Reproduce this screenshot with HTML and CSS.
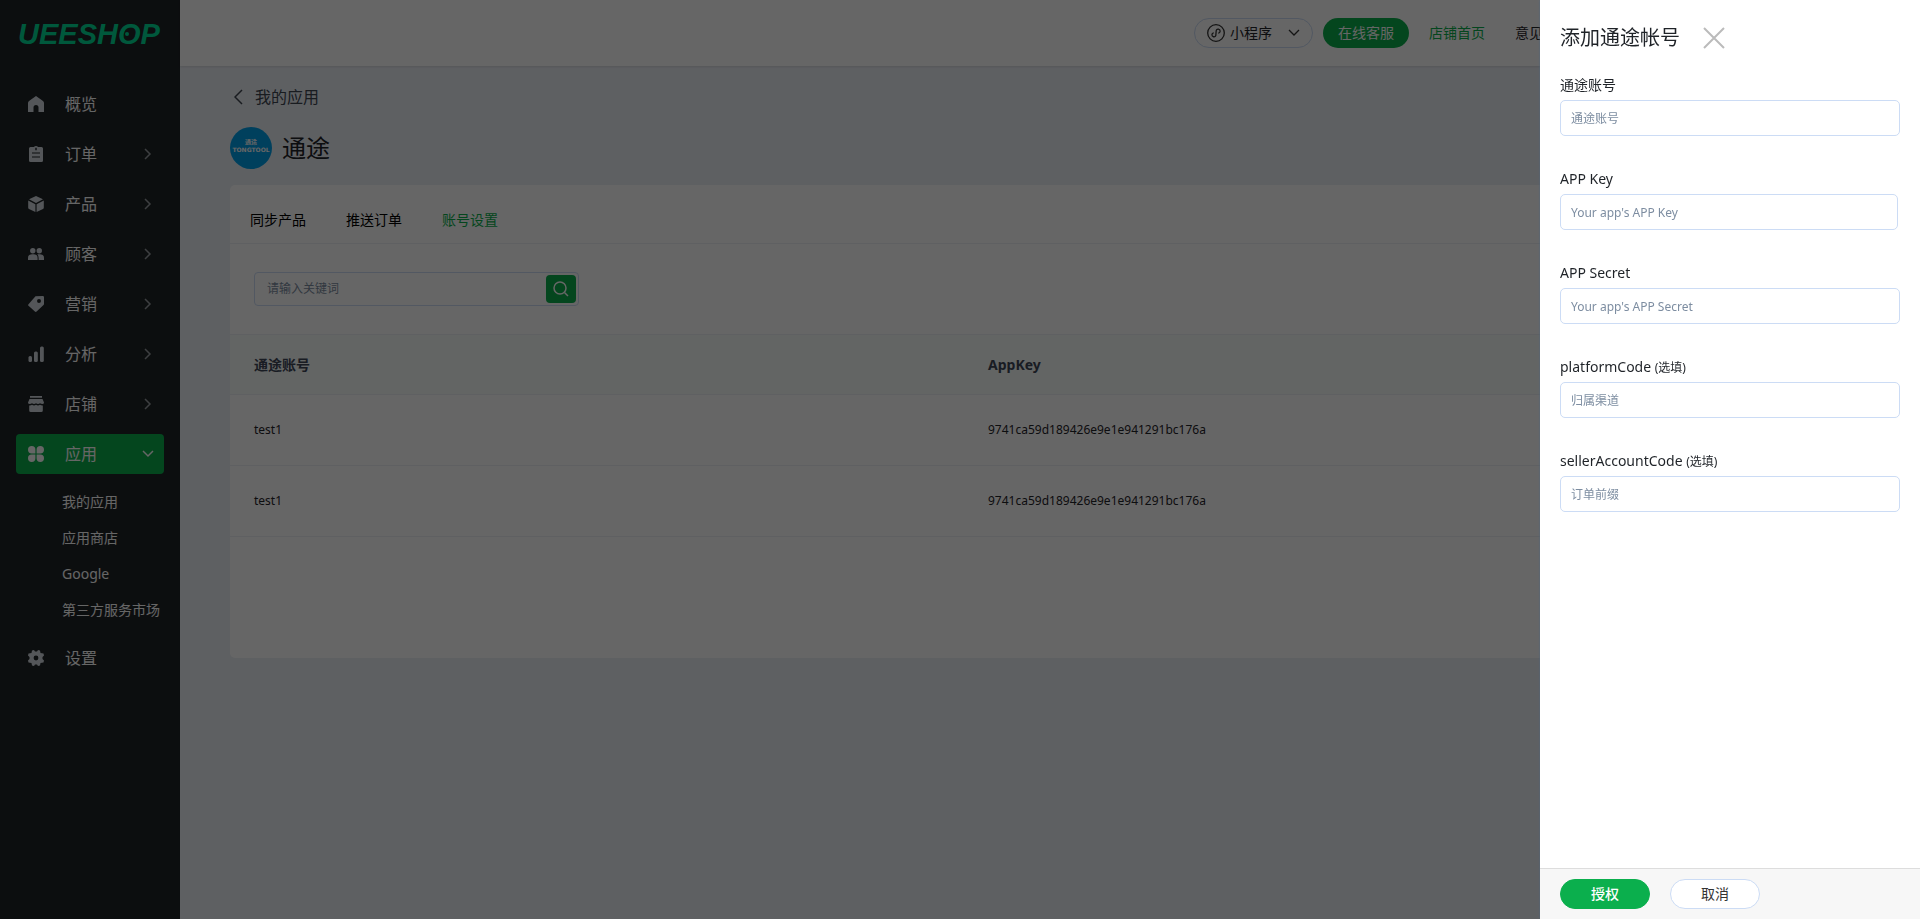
FILE: index.html
```html
<!DOCTYPE html>
<html lang="zh-CN">
  <head>
    <meta charset="UTF-8" />
    <meta name="viewport" content="width=device-width, initial-scale=1.0" />
    <title>通途</title>
    <link rel="stylesheet" href="styles.css">
  </head>
  <body>
    <div class="layout">
      <aside class="sidebar">
        <a class="logo" href="#" aria-label="UEESHOP">
          <svg width="148" height="36" viewBox="0 0 148 36">
            <text class="logo-text" x="2" y="26">UEESHOP</text>
            <circle cx="111" cy="16" r="2" />
          </svg>
        </a>
        <nav class="menu">
          <a class="menu-item" href="#">
            <svg class="menu-icon" viewBox="0 0 16 16"><path d="M8 0 L15 5 Q16 5.800 16 7 V16 H10.500 V11.500 A2.500 2.500 0 0 0 5.500 11.500 V16 H0 V7 Q0 5.800 1 5 Z"/></svg>
            <span>概览</span>
          </a>
          <a class="menu-item" href="#">
            <svg class="menu-icon" viewBox="0 0 16 16"><path fill-rule="evenodd" d="M5 1 H6 A2.200 1.500 0 0 1 10 1 H13.500 A1.500 1.500 0 0 1 15 2.500 V14.500 A1.500 1.500 0 0 1 13.500 16 H2.500 A1.500 1.500 0 0 1 1 14.500 V2.500 A1.500 1.500 0 0 1 2.500 1 Z M7.300 1.800 V4.200 H8.700 V1.800 Z M4 6.400 V7.600 H12 V6.400 Z M4 10.400 V11.600 H12 V10.400 Z"/></svg>
            <span>订单</span>
            <svg class="arrow" viewBox="0 0 8 12"><path d="M1 1 L6 6 L1 11"/></svg>
          </a>
          <a class="menu-item" href="#">
            <svg class="menu-icon" viewBox="0 0 16 16"><path d="M8 0 L15 3.300 L8 7 L1 3.300 Z M0.200 4.600 L7.400 8.300 V16 L1 13 Q0.200 12.600 0.200 11.800 Z M15.800 4.600 L8.600 8.300 V16 L15 13 Q15.800 12.600 15.800 11.800 Z"/></svg>
            <span>产品</span>
            <svg class="arrow" viewBox="0 0 8 12"><path d="M1 1 L6 6 L1 11"/></svg>
          </a>
          <a class="menu-item" href="#">
            <svg class="menu-icon" viewBox="0 0 16 16"><circle cx="4.800" cy="4.800" r="2.700"/><circle cx="11.300" cy="4.800" r="2.700"/><path d="M0 14 V12 Q0 8.300 4 8.300 H6 Q9.600 8.300 9.600 12 V14 Z M10.600 14 V12 Q10.600 9.500 9.200 8.300 H12 Q16 8.300 16 12 V14 Z"/></svg>
            <span>顾客</span>
            <svg class="arrow" viewBox="0 0 8 12"><path d="M1 1 L6 6 L1 11"/></svg>
          </a>
          <a class="menu-item" href="#">
            <svg class="menu-icon" viewBox="0 0 16 16"><path fill-rule="evenodd" d="M7.500 0.300 L14.800 0 Q16 0 16 1.200 V8 Q16 8.600 15.500 9.100 L8.600 15.600 Q7.700 16.400 6.900 15.600 L0.500 9.800 Q-0.300 9 0.500 8.200 Z M11 3 A2 2 0 1 0 11 7 A2 2 0 1 0 11 3 Z"/></svg>
            <span>营销</span>
            <svg class="arrow" viewBox="0 0 8 12"><path d="M1 1 L6 6 L1 11"/></svg>
          </a>
          <a class="menu-item" href="#">
            <svg class="menu-icon" viewBox="0 0 16 16"><rect x="0.500" y="10" width="3.500" height="6" rx="1.500"/><rect x="6" y="5.500" width="3.800" height="10.500" rx="1.500"/><rect x="12" y="0.500" width="3.800" height="15.500" rx="1.500"/></svg>
            <span>分析</span>
            <svg class="arrow" viewBox="0 0 8 12"><path d="M1 1 L6 6 L1 11"/></svg>
          </a>
          <a class="menu-item" href="#">
            <svg class="menu-icon" viewBox="0 0 16 16"><path d="M2 0 H14 V1.800 H2 Z M1.500 3 H14.500 L16 6.500 Q16 8 14.300 8 Q13 8 12 7.200 Q11 8 10 8 Q9 8 8 7.200 Q7 8 6 8 Q5 8 4 7.200 Q3 8 1.700 8 Q0 8 0 6.500 Z M1.200 9.500 Q2.800 9.700 4 8.800 Q6 10 8 8.800 Q10 10 12 8.800 Q13.200 9.700 14.800 9.500 V14.500 Q14.800 16 13.300 16 H2.700 Q1.200 16 1.200 14.500 Z"/></svg>
            <span>店铺</span>
            <svg class="arrow" viewBox="0 0 8 12"><path d="M1 1 L6 6 L1 11"/></svg>
          </a>
          <a class="menu-item active" href="#">
            <svg class="menu-icon" viewBox="0 0 16 16"><path d="M3.700 0 A3.700 3.700 0 0 1 7.400 3.700 V7.400 H3.700 A3.700 3.700 0 0 1 3.700 0 Z M12.300 0 A3.700 3.700 0 0 1 12.300 7.400 H8.600 V3.700 A3.700 3.700 0 0 1 12.300 0 Z M3.700 8.600 H7.400 V12.300 A3.700 3.700 0 1 1 3.700 8.600 Z M8.600 8.600 H12.300 A3.700 3.700 0 1 1 8.600 12.300 Z"/></svg>
            <span>应用</span>
            <svg class="arrow arrow-down" viewBox="0 0 12 8"><path d="M1 1 L6 6 L11 1"/></svg>
          </a>
          <div class="submenu">
            <a href="#">我的应用</a>
            <a href="#">应用商店</a>
            <a href="#">Google</a>
            <a href="#">第三方服务市场</a>
          </div>
          <a class="menu-item" href="#">
            <svg class="menu-icon" viewBox="0 0 16 16"><path fill-rule="evenodd" d="M4 0.500 L6 0 L7 1.500 H9 L10 0 L12 0.500 L12.500 3 L15.500 3.500 L16 5.500 L14.500 7 V9 L16 10.500 L15.500 12.500 L12.500 13 L12 15.500 L10 16 L9 14.500 H7 L6 16 L4 15.500 L3.500 13 L0.500 12.500 L0 10.500 L1.500 9 V7 L0 5.500 L0.500 3.500 L3.500 3 Z M8 5.600 A2.400 2.400 0 1 0 8 10.400 A2.400 2.400 0 1 0 8 5.600 Z"/></svg>
            <span>设置</span>
          </a>
        </nav>
      </aside>

      <div class="main">
        <header class="header">
          <div class="channel">
            <svg class="channel-icon" viewBox="0 0 18 18"><circle cx="9" cy="9" r="8.300"/><path d="M6.800 8.800 A2 2 0 1 0 8.800 11.500 L9.200 6.700 A2 2 0 1 1 11.200 9.200"/></svg>
            <select aria-label="渠道">
              <option>小程序</option>
            </select>
            <svg class="channel-arrow" viewBox="0 0 12 8"><path d="M1 1 L6 6 L11 1"/></svg>
          </div>
          <button class="service-btn" type="button">在线客服</button>
          <a class="shop-link" href="#">店铺首页</a>
          <a class="feedback-link" href="#">意见反馈</a>
        </header>

        <main class="content">
          <a class="back" href="#">
            <svg viewBox="0 0 9 16"><path d="M8 1 L1 8 L8 15"/></svg>
            我的应用
          </a>
          <div class="app-title">
            <svg class="app-logo" viewBox="0 0 42 42">
              <circle cx="21" cy="21" r="21"/>
              <text x="21" y="17">通途</text>
              <text class="app-logo-en" x="21" y="25">TONGTOOL</text>
            </svg>
            <h1>通途</h1>
          </div>

          <section class="panel">
            <nav class="tabs">
              <a href="#">同步产品</a>
              <a href="#">推送订单</a>
              <a class="current" href="#">账号设置</a>
            </nav>
            <form class="search">
              <input type="text" placeholder="请输入关键词" aria-label="请输入关键词">
              <button type="button" aria-label="搜索">
                <svg viewBox="0 0 16 16"><circle cx="7" cy="7" r="6"/><path d="M11.500 11.500 L15 15"/></svg>
              </button>
            </form>
            <table class="accounts">
              <thead>
                <tr>
                  <th>通途账号</th>
                  <th>AppKey</th>
                  <th class="col-action"></th>
                </tr>
              </thead>
              <tbody>
                <tr>
                  <td>test1</td>
                  <td>9741ca59d189426e9e1e941291bc176a</td>
                  <td></td>
                </tr>
                <tr>
                  <td>test1</td>
                  <td>9741ca59d189426e9e1e941291bc176a</td>
                  <td></td>
                </tr>
              </tbody>
            </table>
          </section>
        </main>
      </div>
    </div>

    <!-- 遮罩层 -->
    <div class="mask"></div>

    <!-- 添加帐号抽屉 -->
    <form class="drawer">
      <div class="drawer-body">
        <div class="drawer-header">
          <h2>添加通途帐号</h2>
          <button class="close-btn" type="button" aria-label="关闭">
            <svg viewBox="0 0 22 22"><path d="M1 1 L21 21 M21 1 L1 21"/></svg>
          </button>
        </div>
        <div class="field">
          <label for="account">通途账号</label>
          <input type="text" id="account" placeholder="通途账号">
        </div>
        <div class="field">
          <label for="app-key">APP Key</label>
          <input type="text" id="app-key" class="key-input" placeholder="Your app's APP Key">
        </div>
        <div class="field">
          <label for="app-secret">APP Secret</label>
          <input type="text" id="app-secret" placeholder="Your app's APP Secret">
        </div>
        <div class="field">
          <label for="platform-code">platformCode <small>(选填)</small></label>
          <input type="text" id="platform-code" placeholder="归属渠道">
        </div>
        <div class="field">
          <label for="seller-code">sellerAccountCode <small>(选填)</small></label>
          <input type="text" id="seller-code" placeholder="订单前缀">
        </div>
      </div>
      <div class="drawer-footer">
        <button class="btn btn-primary" type="button">授权</button>
        <button class="btn" type="button">取消</button>
      </div>
    </form>
  </body>
</html>
```
FILE: styles.css
```css
* {
  box-sizing: border-box;
}

body {
  margin: 0;
  font-family: "Noto Sans", "Noto Sans CJK SC", sans-serif;
  font-size: 14px;
  line-height: 20px;
  color: #1f2328;
}

a {
  color: inherit;
  text-decoration: none;
}

button,
input,
select {
  font: inherit;
  color: inherit;
}

button {
  padding: 0;
  border: none;
  cursor: pointer;
}

.layout {
  display: flex;
  min-height: 100vh;
}

/* 侧边栏 */
.sidebar {
  flex: none;
  width: 180px;
  padding: 18px 16px;
  background-color: #1f2327;
  color: #fff;
}

.logo {
  display: block;
  height: 66px;
}

.logo svg {
  display: block;
  fill: #00dc96;
}

.logo-text {
  font-family: "Liberation Sans", sans-serif;
  font-size: 29px;
  font-weight: bold;
  font-style: italic;
}

.menu-item {
  display: flex;
  align-items: center;
  height: 40px;
  margin-bottom: 10px;
  padding: 0 10px 0 12px;
  border-radius: 4px;
  font-size: 16px;
}

.menu-icon {
  width: 16px;
  height: 16px;
  margin-right: 21px;
  fill: #d2d8de;
}

.arrow {
  width: 8px;
  height: 12px;
  margin: 0 2px 0 auto;
  fill: none;
  stroke: #999da2;
  stroke-width: 1.5;
}

.arrow-down {
  width: 12px;
  height: 8px;
  margin-right: 0;
  stroke: #fff;
}

.menu-item.active {
  background-color: #0baf4d;
}

.active .menu-icon {
  fill: #fff;
}

.submenu {
  padding-bottom: 10px;
}

.submenu a {
  display: block;
  margin-left: 46px;
  line-height: 36px;
  white-space: nowrap;
}

/* 顶栏 */
.main {
  flex: 1;
  min-width: 0;
  background-color: #ebeff5;
}

.header {
  display: flex;
  align-items: center;
  justify-content: flex-end;
  height: 66px;
  padding-right: 349px;
  background-color: #fff;
  box-shadow: 0 1px 2px rgba(0, 0, 0, 0.1);
}

.channel {
  display: flex;
  align-items: center;
  width: 119px;
  height: 30px;
  margin-right: 10px;
  padding: 0 12px;
  border: 1px solid #ccdcf5;
  border-radius: 15px;
}

.channel select {
  flex: 1;
  min-width: 0;
  padding: 0;
  border: none;
  background: none;
  appearance: none;
}

.channel svg {
  flex: none;
  fill: none;
  stroke: #333;
  stroke-width: 1.3;
}

.channel-icon {
  width: 18px;
  height: 18px;
  margin-right: 5px;
}

.channel-arrow {
  width: 12px;
  height: 8px;
}

.service-btn {
  width: 86px;
  height: 30px;
  margin-right: 20px;
  border-radius: 15px;
  background-color: #0baf4d;
  color: #fff;
}

.shop-link {
  margin-right: 30px;
  color: #0baf4d;
}

/* 内容 */
.content {
  padding: 21px 50px;
}

.back {
  display: flex;
  align-items: center;
  gap: 12px;
  padding-left: 4px;
  font-size: 16px;
  color: #404852;
}

.back svg {
  width: 9px;
  height: 16px;
  fill: none;
  stroke: #404852;
  stroke-width: 1.5;
}

.app-title {
  display: flex;
  align-items: center;
  gap: 10px;
  margin: 20px 0 16px;
}

.app-title h1 {
  margin: 0;
  font-size: 24px;
  font-weight: 400;
  line-height: 32px;
}

.app-logo {
  width: 42px;
  height: 42px;
  fill: #00a0e9;
}

.app-logo text {
  fill: #fff;
  font-size: 6px;
  font-weight: bold;
  text-anchor: middle;
}

.app-logo .app-logo-en {
  font-family: "DejaVu Sans", sans-serif;
  font-size: 6px;
}

.panel {
  min-height: 473px;
  border-radius: 5px;
  background-color: #fff;
}

.tabs {
  display: flex;
  gap: 40px;
  padding: 25px 20px 13px;
  border-bottom: 1px solid #edf0f5;
  color: #000;
}

.tabs .current {
  color: #0baf4d;
}

.search {
  display: flex;
  width: 325px;
  height: 34px;
  margin: 28px 24px;
  padding: 2px;
  border: 1px solid #ccdcf5;
  border-radius: 4px;
}

.search input {
  flex: 1;
  min-width: 0;
  padding: 0 10px;
  border: none;
  background: none;
  font-size: 12px;
}

input::placeholder {
  color: #7d8da1;
  opacity: 1;
}

.search button {
  display: flex;
  align-items: center;
  justify-content: center;
  width: 30px;
  border-radius: 4px;
  background-color: #0baf4d;
}

.search svg {
  width: 16px;
  height: 16px;
  fill: none;
  stroke: #fff;
  stroke-width: 1.5;
}

.accounts {
  width: 100%;
  border-spacing: 0;
  table-layout: fixed;
  text-align: left;
}

.accounts th,
.accounts td {
  padding: 0 24px;
  border-bottom: 1px solid #edf0f5;
}

.accounts th {
  height: 61px;
  border-top: 1px solid #edf0f5;
  background-color: #f8fcfa;
  color: #404859;
}

.accounts td {
  height: 71px;
  font-size: 12px;
}

.accounts .col-action {
  width: 172px;
}

/* 遮罩层 */
.mask {
  position: fixed;
  inset: 0;
  background-color: rgba(0, 0, 0, 0.6);
}

/* 抽屉 */
.drawer {
  position: fixed;
  top: 0;
  right: 0;
  bottom: 0;
  display: flex;
  flex-direction: column;
  width: 380px;
  background-color: #fff;
  box-shadow: 0 0 2px #4d6480;
}

.drawer-body {
  flex: 1;
  padding: 22px 20px;
  overflow: auto;
}

.drawer-header {
  display: flex;
  align-items: center;
  gap: 23px;
  margin-bottom: 20px;
}

.drawer-header h2 {
  margin: 0;
  font-size: 20px;
  font-weight: 400;
  line-height: 32px;
}

.close-btn {
  display: flex;
  background: none;
}

.close-btn svg {
  width: 22px;
  height: 22px;
  fill: none;
  stroke: #bbb;
  stroke-width: 2;
}

.field {
  margin-bottom: 32px;
}

.field label {
  display: block;
  margin-bottom: 4px;
  line-height: 22px;
}

.field small {
  font-size: 12px;
  line-height: 1;
}

.field input {
  display: block;
  width: 100%;
  height: 36px;
  padding: 0 10px;
  border: 1px solid #ccdcf5;
  border-radius: 5px;
  font-size: 12px;
}

.field .key-input {
  width: 338px;
}

.drawer-footer {
  display: flex;
  gap: 20px;
  padding: 10px 20px;
  border-top: 1px solid #ddd;
  background-color: #f7f7f7;
}

.btn {
  width: 90px;
  height: 30px;
  border: 1px solid #ccdcf5;
  border-radius: 15px;
  background-color: #fff;
  color: #333;
}

.btn-primary {
  border-color: #0baf4d;
  background-color: #0baf4d;
  color: #fff;
  font-weight: 500;
}
```
